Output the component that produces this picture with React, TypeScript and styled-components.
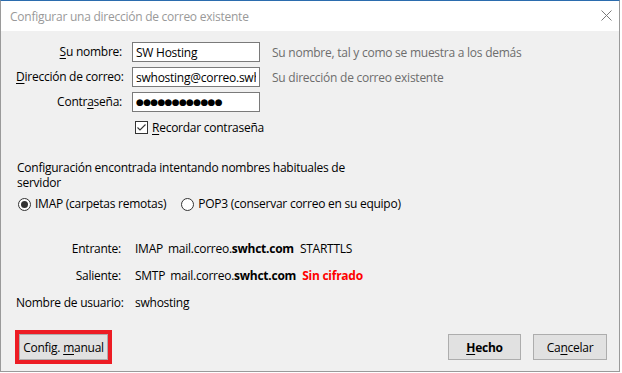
import { createGlobalStyle, styled } from 'styled-components';

const GlobalStyle = createGlobalStyle`
  html, body {
    margin: 0;
    padding: 0;
    background: #ffffff;
  }
  body {
    font-family: "Open Sans", "Noto Sans", "Liberation Sans", sans-serif;
    font-size: 12px;
    letter-spacing: -0.25px;
    color: #000000;
  }
`;

const App = () => {
  return (
    <>
      <GlobalStyle />
      <St.Window>
        <St.TitleBar>
          <St.Title>Configurar una dirección de correo existente</St.Title>
          <St.Close aria-label="Cerrar">
            <svg width="11" height="11" viewBox="0 0 11 11">
              <path d="M0.5 0.5 L10.5 10.5 M10.5 0.5 L0.5 10.5" stroke="#7a7a7a" strokeWidth="1" fill="none" />
            </svg>
          </St.Close>
        </St.TitleBar>

        <St.Body>
          <St.Form>
            <St.Label>
              <St.Key>S</St.Key>u nombre:
            </St.Label>
            <St.Input readOnly defaultValue="SW Hosting" />
            <St.Hint>Su nombre, tal y como se muestra a los demás</St.Hint>

            <St.Label>
              <St.Key>D</St.Key>irección de correo:
            </St.Label>
            <St.Input readOnly defaultValue="swhosting@correo.swhct.com" />
            <St.Hint>Su dirección de correo existente</St.Hint>

            <St.Label>
              Contr<St.Key>a</St.Key>seña:
            </St.Label>
            <St.Password>●●●●●●●●●●●●</St.Password>
            <span />

            <St.CheckRow>
              <St.CheckBox>
                <svg width="11" height="11" viewBox="0 0 11 11">
                  <path d="M1.5 5.5 L4 8 L9.5 2.5" stroke="#333333" strokeWidth="1.1" fill="none" />
                </svg>
              </St.CheckBox>
              <span>
                <St.Key>R</St.Key>ecordar contraseña
              </span>
            </St.CheckRow>
          </St.Form>

          <St.Notice>Configuración encontrada intentando nombres habituales de servidor</St.Notice>

          <St.RadioRow>
            <St.RadioOption>
              <St.Radio $checked />
              IMAP (carpetas remotas)
            </St.RadioOption>
            <St.RadioOption>
              <St.Radio />
              POP3 (conservar correo en su equipo)
            </St.RadioOption>
          </St.RadioRow>

          <St.Info>
            <St.InfoLabel>Entrante:</St.InfoLabel>
            <St.InfoValue>
              <span>IMAP</span>
              <span>
                mail.correo.<b>swhct.com</b>
              </span>
              <St.Security>STARTTLS</St.Security>
            </St.InfoValue>

            <St.InfoLabel>Saliente:</St.InfoLabel>
            <St.InfoValue>
              <span>SMTP</span>
              <span>
                mail.correo.<b>swhct.com</b>
              </span>
              <St.Security $danger>Sin cifrado</St.Security>
            </St.InfoValue>

            <St.InfoLabel>Nombre de usuario:</St.InfoLabel>
            <St.InfoValue>swhosting</St.InfoValue>
          </St.Info>

          <St.Footer>
            <St.Button $w={89} $marked>
              Config. <St.Key>m</St.Key>anual
            </St.Button>
            <St.Actions>
              <St.Button $w={73} $bold>
                <St.Key>H</St.Key>echo
              </St.Button>
              <St.Button $w={74}>
                Ca<St.Key>n</St.Key>celar
              </St.Button>
            </St.Actions>
          </St.Footer>
        </St.Body>
      </St.Window>
    </>
  );
};

export default App;

const St = {
  Window: styled.div`
    display: flex;
    flex-direction: column;

    box-sizing: border-box;
    width: 620px;
    height: 372px;

    border: 1px solid #9a9a9a;
    border-top-color: #2b6cae;
  `,
  TitleBar: styled.div`
    display: flex;
    justify-content: space-between;
    align-items: center;

    height: 30px;
    padding: 0 7px 0 9px;

    background: #ffffff;
  `,
  Title: styled.span`
    font-size: 12px;
    color: #999999;
  `,
  Close: styled.span`
    display: flex;
    margin-top: -1px;
  `,
  Body: styled.div`
    display: flex;
    flex: 1;
    flex-direction: column;

    padding: 11px 12px 11px 15px;

    background: #f0f0f0;
  `,
  Form: styled.div`
    display: grid;
    grid-template-columns: 106px 128px 1fr;
    grid-auto-rows: 20px;
    column-gap: 10px;
    row-gap: 5px;
    align-items: center;
  `,
  Label: styled.label`
    text-align: right;
    white-space: nowrap;
    line-height: 16px;
  `,
  Key: styled.u`
    text-decoration: underline;
    text-underline-offset: 2px;
  `,
  Input: styled.input`
    box-sizing: border-box;
    width: 128px;
    height: 20px;
    padding: 0 3px;

    font: inherit;
    letter-spacing: inherit;
    color: #000000;

    background: #ffffff;
    border: 1px solid #7a7a7a;
    border-radius: 0;
    outline: none;
  `,
  Password: styled.div`
    box-sizing: border-box;
    width: 128px;
    height: 20px;
    padding: 0 3px;

    font-family: "DejaVu Sans", sans-serif;
    font-size: 9px;
    line-height: 18px;
    letter-spacing: -0.7px;
    white-space: nowrap;
    overflow: hidden;

    background: #ffffff;
    border: 1px solid #7a7a7a;
  `,
  Hint: styled.span`
    margin-left: 2px;
    white-space: nowrap;
    color: #6d6d6d;
  `,
  CheckRow: styled.div`
    grid-column: 2 / span 2;
    display: flex;
    align-items: center;
    gap: 4px;

    margin-top: 0;
    padding-left: 3px;
  `,
  CheckBox: styled.span`
    display: flex;
    align-items: center;
    justify-content: center;

    box-sizing: border-box;
    width: 13px;
    height: 13px;

    background: #ffffff;
    border: 1px solid #333333;
  `,
  Notice: styled.p`
    max-width: 345px;
    margin: 23px 0 0 1px;

    line-height: 15px;
  `,
  RadioRow: styled.div`
    display: flex;
    gap: 15px;

    margin-top: 6px;
    padding-left: 2px;
    line-height: 16px;
  `,
  RadioOption: styled.label`
    display: flex;
    align-items: center;
    gap: 4px;
  `,
  Radio: styled.span<{ $checked?: boolean }>`
    display: flex;
    align-items: center;
    justify-content: center;

    box-sizing: border-box;
    width: 13px;
    height: 13px;

    background: #ffffff;
    border: 1px solid #333333;
    border-radius: 50%;

    &::after {
      content: '';
      display: ${({ $checked }) => ($checked ? 'block' : 'none')};
      width: 7px;
      height: 7px;
      background: #333333;
      border-radius: 50%;
    }
  `,
  Info: styled.div`
    display: grid;
    grid-template-columns: 105px 1fr;
    grid-auto-rows: 16px;
    column-gap: 14px;
    row-gap: 11px;

    margin-top: 29px;
    line-height: 16px;
  `,
  InfoLabel: styled.span`
    text-align: right;
    white-space: nowrap;
  `,
  InfoValue: styled.span`
    display: flex;
    gap: 5px;
    white-space: nowrap;
  `,
  Security: styled.span<{ $danger?: boolean }>`
    margin-left: 1px;
    font-weight: ${({ $danger }) => ($danger ? 700 : 400)};
    color: ${({ $danger }) => ($danger ? '#ff0000' : '#000000')};
  `,
  Footer: styled.div`
    display: flex;
    align-items: center;

    margin-top: auto;
    padding-left: 3px;
  `,
  Actions: styled.div`
    display: flex;
    gap: 12px;
    margin-left: auto;
  `,
  Button: styled.button<{ $w: number; $bold?: boolean; $marked?: boolean }>`
    box-sizing: border-box;
    width: ${({ $w }) => $w}px;
    height: 26px;
    padding: 0;

    font: inherit;
    font-weight: ${({ $bold }) => ($bold ? 700 : 400)};
    letter-spacing: inherit;
    color: #000000;

    background: #e1e1e1;
    border: 1px solid #adadad;
    border-radius: 0;
    outline: ${({ $marked }) => ($marked ? '4px solid #ed1c24' : 'none')};
  `,
};
